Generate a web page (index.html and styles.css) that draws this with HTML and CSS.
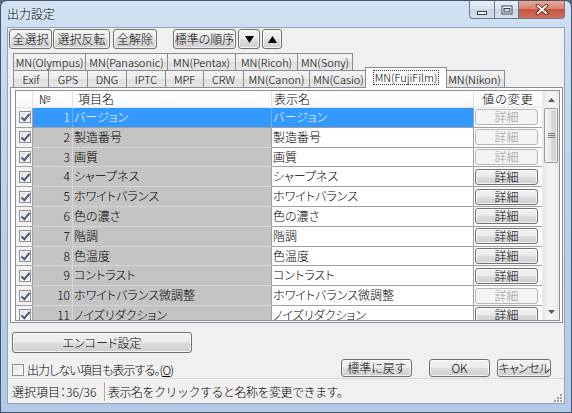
FILE: index.html
```html
<!DOCTYPE html>
<html lang="ja">
<head>
<meta charset="utf-8">
<title>出力設定</title>
<link rel="stylesheet" href="styles.css">
</head>
<body>
<div class="window">
  <div class="titlebar">
    <div class="title">出力設定</div>
    <div class="caption-buttons">
      <div class="cap cap-min"><svg width="12" height="6" viewBox="0 0 12 6"><rect x="1.5" y="1.5" width="9" height="3" fill="#fff" stroke="#34435a"/></svg></div>
      <div class="cap cap-max"><svg width="12" height="10" viewBox="0 0 12 10"><rect x="0.5" y="0.5" width="11" height="9" fill="#34435a"/><rect x="1.5" y="1.5" width="9" height="7" fill="#fff"/><rect x="3" y="3.5" width="6" height="3.5" fill="#cfdbea" stroke="#34435a"/></svg></div>
      <div class="cap cap-close"><svg width="14" height="11" viewBox="0 0 14 11"><path d="M2.5 1.5 L11.5 9.5 M11.5 1.5 L2.5 9.5" stroke="#5a1c14" stroke-width="3.6" stroke-linecap="round"/><path d="M2.5 1.5 L11.5 9.5 M11.5 1.5 L2.5 9.5" stroke="#fff" stroke-width="1.8" stroke-linecap="round"/></svg></div>
    </div>
  </div>

  <div class="client">
    <div class="toolbar">
      <button class="btn w-all">全選択</button>
      <button class="btn w-inv">選択反転</button>
      <button class="btn w-clr">全解除</button>
      <button class="btn w-std">標準の順序</button>
      <button class="btn w-down"><svg width="9" height="7" viewBox="0 0 9 7"><polygon points="0,0 9,0 4.5,7" fill="#000"/></svg></button>
      <button class="btn w-up"><svg width="9" height="7" viewBox="0 0 9 7"><polygon points="4.5,0 9,7 0,7" fill="#000"/></svg></button>
    </div>

    <div class="tabs">
      <div class="tabrow">
        <div class="tab t73">MN(Olympus)</div>
        <div class="tab t83">MN(Panasonic)</div>
        <div class="tab t69">MN(Pentax)</div>
        <div class="tab t63">MN(Ricoh)</div>
        <div class="tab t56">MN(Sony)</div>
      </div>
      <div class="tabrow">
        <div class="tab t36">Exif</div>
        <div class="tab t40">GPS</div>
        <div class="tab t40">DNG</div>
        <div class="tab t40">IPTC</div>
        <div class="tab t39">MPF</div>
        <div class="tab t41">CRW</div>
        <div class="tab t67">MN(Canon)</div>
        <div class="tab t59">MN(Casio)</div>
        <div class="tab t78 sel"><span class="focus">MN(FujiFilm)</span></div>
        <div class="tab t61">MN(Nikon)</div>
      </div>
    </div>

    <div class="panel">
      <div class="grid">
        <div class="gmain">
          <div class="ghead">
            <div class="h h-chk"></div>
            <div class="h h-no">№</div>
            <div class="h h-name">項目名</div>
            <div class="h h-disp">表示名</div>
            <div class="h h-val">値の変更</div>
          </div>
          <div class="grow sel">
            <div class="c c-chk"><span class="gchk"></span></div>
            <div class="c c-no">1</div>
            <div class="c c-name">バージョン</div>
            <div class="c c-disp">バージョン</div>
            <div class="c c-val"><span class="dbtn off">詳細</span></div>
          </div>
          <div class="grow">
            <div class="c c-chk"><span class="gchk"></span></div>
            <div class="c c-no">2</div>
            <div class="c c-name">製造番号</div>
            <div class="c c-disp">製造番号</div>
            <div class="c c-val"><span class="dbtn off">詳細</span></div>
          </div>
          <div class="grow">
            <div class="c c-chk"><span class="gchk"></span></div>
            <div class="c c-no">3</div>
            <div class="c c-name">画質</div>
            <div class="c c-disp">画質</div>
            <div class="c c-val"><span class="dbtn off">詳細</span></div>
          </div>
          <div class="grow">
            <div class="c c-chk"><span class="gchk"></span></div>
            <div class="c c-no">4</div>
            <div class="c c-name">シャープネス</div>
            <div class="c c-disp">シャープネス</div>
            <div class="c c-val"><span class="dbtn">詳細</span></div>
          </div>
          <div class="grow">
            <div class="c c-chk"><span class="gchk"></span></div>
            <div class="c c-no">5</div>
            <div class="c c-name">ホワイトバランス</div>
            <div class="c c-disp">ホワイトバランス</div>
            <div class="c c-val"><span class="dbtn">詳細</span></div>
          </div>
          <div class="grow">
            <div class="c c-chk"><span class="gchk"></span></div>
            <div class="c c-no">6</div>
            <div class="c c-name">色の濃さ</div>
            <div class="c c-disp">色の濃さ</div>
            <div class="c c-val"><span class="dbtn">詳細</span></div>
          </div>
          <div class="grow">
            <div class="c c-chk"><span class="gchk"></span></div>
            <div class="c c-no">7</div>
            <div class="c c-name">階調</div>
            <div class="c c-disp">階調</div>
            <div class="c c-val"><span class="dbtn">詳細</span></div>
          </div>
          <div class="grow">
            <div class="c c-chk"><span class="gchk"></span></div>
            <div class="c c-no">8</div>
            <div class="c c-name">色温度</div>
            <div class="c c-disp">色温度</div>
            <div class="c c-val"><span class="dbtn">詳細</span></div>
          </div>
          <div class="grow">
            <div class="c c-chk"><span class="gchk"></span></div>
            <div class="c c-no">9</div>
            <div class="c c-name">コントラスト</div>
            <div class="c c-disp">コントラスト</div>
            <div class="c c-val"><span class="dbtn">詳細</span></div>
          </div>
          <div class="grow">
            <div class="c c-chk"><span class="gchk"></span></div>
            <div class="c c-no">10</div>
            <div class="c c-name">ホワイトバランス微調整</div>
            <div class="c c-disp">ホワイトバランス微調整</div>
            <div class="c c-val"><span class="dbtn off">詳細</span></div>
          </div>
          <div class="grow">
            <div class="c c-chk"><span class="gchk"></span></div>
            <div class="c c-no">11</div>
            <div class="c c-name">ノイズリダクション</div>
            <div class="c c-disp">ノイズリダクション</div>
            <div class="c c-val"><span class="dbtn">詳細</span></div>
          </div>
        </div>
        <div class="vscroll">
          <div class="sb-btn"><svg width="7" height="4" viewBox="0 0 7 4"><polygon points="3.5,0 7,4 0,4" fill="#5c5c5c"/></svg></div>
          <div class="sb-track">
            <div class="sb-thumb"><svg width="7" height="5" viewBox="0 0 7 5"><path d="M0 0.5 H7 M0 2.5 H7 M0 4.5 H7" stroke="#7a7a7a" stroke-width="1"/></svg></div>
          </div>
          <div class="sb-btn"><svg width="7" height="4" viewBox="0 0 7 4"><polygon points="0,0 7,0 3.5,4" fill="#5c5c5c"/></svg></div>
        </div>
      </div>
    </div>

    <div class="encode-row">
      <button class="btn w-enc">エンコード設定</button>
    </div>

    <div class="options-row">
      <label class="showall"><span class="ubox"></span><span class="showall-text">出力しない項目も表示する。(<u>O</u>)</span></label>
      <div class="actions">
        <button class="btn w-reset">標準に戻す</button>
        <button class="btn w-ok">OK</button>
        <button class="btn w-cancel">キャンセル</button>
      </div>
    </div>

    <div class="status">
      <span class="st-count">選択項目：36/36</span>
      <span class="st-sep"></span>
      <span class="st-msg">表示名をクリックすると名称を変更できます。</span>
      <span class="st-grip"><svg width="8" height="8" viewBox="0 0 8 8"><g fill="#9aa0a8"><rect x="6" y="0" width="2" height="2"/><rect x="3" y="3" width="2" height="2"/><rect x="6" y="3" width="2" height="2"/><rect x="0" y="6" width="2" height="2"/><rect x="3" y="6" width="2" height="2"/><rect x="6" y="6" width="2" height="2"/></g></svg></span>
    </div>
  </div>
  <div class="bottom-frame"></div>
</div>
</body>
</html>
```

FILE: styles.css
```css
* { box-sizing: border-box; }
html, body { margin: 0; padding: 0; }
body {
  width: 572px;
  height: 413px;
  overflow: hidden;
  background: #5d6a7a;
  font-family: "Noto Sans CJK JP", "Liberation Sans", sans-serif;
  font-size: 12px;
  font-weight: 300;
  font-feature-settings: "palt";
  color: #000;
}

.window {
  width: 572px;
  height: 413px;
  border: 1px solid #46566c;
  border-radius: 7px 7px 0 0;
  background: linear-gradient(180deg, #d2e1f3 0%, #c3d7ee 25%, #b9cfe9 60%, #b3cae6 100%);
  display: flex;
  flex-direction: column;
  overflow: hidden;
}

/* title bar */
.titlebar {
  height: 27px;
  display: flex;
  align-items: flex-start;
  padding-left: 6px;
  flex: none;
}
.title {
  margin-top: 5px;
  line-height: 16px;
  font-size: 12px;
  text-shadow: 0 0 6px rgba(255,255,255,0.9);
}
.caption-buttons {
  margin-left: auto;
  margin-right: 6px;
  display: flex;
  height: 18px;
}
.cap {
  height: 18px;
  border: 1px solid #6a7890;
  border-top: none;
  display: flex;
  align-items: center;
  justify-content: center;
}
.cap-min {
  width: 26px;
  border-radius: 0 0 0 4px;
  background: linear-gradient(180deg, #e9eef5 0%, #dce4ee 45%, #cbd6e4 50%, #d6dfeb 100%);
  padding-top: 6px;
}
.cap-max {
  width: 24px;
  border-left: none;
  background: linear-gradient(180deg, #e9eef5 0%, #dce4ee 45%, #cbd6e4 50%, #d6dfeb 100%);
}
.cap-close {
  width: 46px;
  border-left: none;
  border-radius: 0 0 4px 0;
  background: linear-gradient(180deg, #e9a898 0%, #d98571 45%, #c5533f 50%, #d0705c 100%);
}

/* client */
.client {
  margin: 0 7px;
  width: 556px;
  height: 375px;
  background: #f0f0f0;
  box-shadow: 0 0 0 1px #8ea3bd;
  display: flex;
  flex-direction: column;
  flex: none;
}
.bottom-frame { flex: 1; }

/* buttons */
.btn {
  font: inherit;
  color: #000;
  padding: 0;
  margin: 0;
  border: 1px solid #707070;
  border-radius: 3px;
  background: linear-gradient(180deg, #f2f2f2 0%, #ebebeb 48%, #dddddd 52%, #cfcfcf 100%);
  box-shadow: inset 0 0 0 1px rgba(255,255,255,0.75);
  display: flex;
  align-items: center;
  justify-content: center;
  line-height: 14px;
  white-space: nowrap;
  flex: none;
}

.toolbar {
  display: flex;
  height: 20px;
  margin-top: 1px;
  padding-left: 1px;
  flex: none;
}
.toolbar .btn { height: 20px; }
.w-all { width: 43px; }
.w-inv { width: 57px; margin-left: 1px; }
.w-clr { width: 44px; margin-left: 3px; }
.w-std { width: 63px; margin-left: 16px; }
.w-down { width: 22px; margin-left: 2px; }
.w-up { width: 20px; margin-left: 2px; }

/* tabs */
.tabs {
  margin-top: 4px;
  margin-left: 5px;
  height: 34px;
  flex: none;
}
.tabrow {
  display: flex;
  height: 17px;
}
.tab {
  height: 17px;
  border: 1px solid #898c95;
  border-bottom: none;
  margin-left: -1px;
  background: linear-gradient(180deg, #f4f4f4 0%, #ececec 48%, #dfdfdf 52%, #e6e6e6 100%);
  font-size: 11px;
  line-height: 14px;
  display: flex;
  align-items: center;
  justify-content: center;
  white-space: nowrap;
  flex: none;
}
.tabrow .tab:first-child { margin-left: 0; }
.tab.sel {
  position: relative;
  z-index: 2;
  background: #fff;
  margin-left: -3px;
  margin-right: -2px;
  margin-top: -3px;
  height: 21px;
  padding-bottom: 1px;
}
.focus {
  border: 1px dotted #333;
  padding: 0 1px;
  line-height: 13px;
}
.t36 { width: 36px; }
.t39 { width: 39px; }
.t40 { width: 40px; }
.t41 { width: 41px; }
.t56 { width: 56px; }
.t59 { width: 59px; }
.t61 { width: 61px; }
.t63 { width: 63px; }
.t67 { width: 67px; }
.t69 { width: 69px; }
.t73 { width: 73px; }
.t78 { width: 82px; }
.t83 { width: 83px; }

/* panel & grid */
.panel {
  margin-left: 2px;
  width: 553px;
  height: 236px;
  border: 1px solid #898c95;
  background: #fff;
  padding: 2px 0 0 4px;
  flex: none;
  position: relative;
  z-index: 1;
}
.grid {
  width: 545px;
  height: 231px;
  border: 1px solid #8a8f98;
  display: flex;
  background: #fff;
}
.gmain {
  width: 526px;
  height: 229px;
  overflow: hidden;
}
.ghead, .grow {
  display: grid;
  grid-template-columns: 17px 40px 199px 202px 68px;
}
.ghead { height: 17px; }
.h {
  background: linear-gradient(180deg, #ffffff 0%, #f6f7f9 100%);
  border-right: 1px solid #e2e3e6;
  border-bottom: 1px solid #e6e7ea;
  line-height: 16px;
  white-space: nowrap;
}
.h-no { padding-left: 6px; }
.h-name { padding-left: 5px; }
.h-disp { padding-left: 2px; }
.h-val { text-align: center; border-right: none; padding-left: 0; letter-spacing: 1px; }

.grow { height: 19.8px; }
.c {
  border-bottom: 1px solid #a0a0a0;
  line-height: 18px;
  white-space: nowrap;
  overflow: hidden;
}
.c-chk {
  background: #f4f4f4;
  border-right: 1px solid #a0a0a0;
  display: flex;
  align-items: center;
  justify-content: center;
}
.c-no {
  background: #c4c4c4;
  border-right: 1px solid #d6d6d6;
  border-bottom-color: #d6d6d6;
  text-align: right;
  padding-right: 2px;
}
.c-name {
  background: #c4c4c4;
  border-right: 1px solid #a0a0a0;
  border-bottom-color: #d6d6d6;
  padding-left: 1px;
}
.c-disp {
  background: #fff;
  border-right: 1px solid #a0a0a0;
  padding-left: 1px;
}
.c-val {
  background: #fbfbfb;
  display: flex;
  align-items: center;
  padding-left: 1px;
}
.grow.sel .c-no,
.grow.sel .c-name,
.grow.sel .c-disp {
  background: #3399ff;
  color: #fff;
  border-bottom-color: #a0a0a0;
}
.grow.sel .c-no { border-right-color: #6ab3ff; }
.grow.sel .c-name { border-right-color: #6ab3ff; }

.gchk {
  width: 12px;
  height: 12px;
  border: 1px solid #8f8f8f;
  background: linear-gradient(135deg, #d8d8d8 0%, #f2f2f2 60%, #ffffff 100%);
  box-shadow: inset 0 0 0 1px #f4f4f4;
  position: relative;
  margin-left: 2px;
}
.gchk::after {
  content: "";
  position: absolute;
  left: 3px;
  top: 0px;
  width: 3px;
  height: 7px;
  border: solid #4a5a7a;
  border-width: 0 2px 2px 0;
  transform: rotate(40deg);
}

.dbtn {
  width: 63px;
  height: 16px;
  border: 1px solid #707070;
  border-radius: 3px;
  background: linear-gradient(180deg, #f2f2f2 0%, #ebebeb 48%, #dddddd 52%, #cfcfcf 100%);
  box-shadow: inset 0 0 0 1px rgba(255,255,255,0.75);
  display: flex;
  align-items: center;
  justify-content: center;
  line-height: 14px;
  font-size: 12px;
}
.dbtn.off {
  border-color: #b4b8bb;
  background: #f4f4f4;
  color: #9a9a9a;
  box-shadow: none;
}

.vscroll {
  width: 17px;
  height: 229px;
  display: flex;
  flex-direction: column;
  background: linear-gradient(90deg, #e6e6e6 0%, #f2f2f2 30%, #f2f2f2 70%, #e9e9e9 100%);
  border-left: 1px solid #ececec;
}
.sb-btn {
  height: 17px;
  display: flex;
  align-items: center;
  justify-content: center;
  flex: none;
}
.sb-track { flex: 1; }
.sb-thumb {
  margin: 0 1px;
  height: 55px;
  border: 1px solid #979797;
  border-radius: 2px;
  background: linear-gradient(90deg, #f3f3f3 0%, #e9e9e9 45%, #d8d8d8 55%, #d0d0d0 100%);
  box-shadow: inset 0 0 0 1px rgba(255,255,255,0.7);
  display: flex;
  align-items: center;
  justify-content: center;
}

/* encode */
.encode-row {
  margin-top: 9px;
  padding-left: 4px;
  height: 21px;
  flex: none;
}
.w-enc { width: 180px; height: 21px; }

/* options */
.options-row {
  margin-top: 6px;
  height: 18px;
  display: flex;
  align-items: center;
  flex: none;
}
.showall {
  display: flex;
  align-items: center;
  margin-left: 4px;
  margin-top: 4px;
  line-height: 14px;
}
.showall-text { letter-spacing: -0.9px; white-space: nowrap; }
.ubox {
  width: 12px;
  height: 12px;
  border: 1px solid #8f8f8f;
  background: linear-gradient(135deg, #dcdcdc 0%, #f4f4f4 60%, #ffffff 100%);
  box-shadow: inset 0 0 0 1px #f6f6f6;
  margin-right: 3px;
}
.actions {
  margin-left: auto;
  margin-right: 13px;
  display: flex;
}
.actions .btn { height: 18px; }
.w-reset { width: 71px; }
.w-ok { width: 61px; margin-left: 17px; }
.w-cancel { width: 54px; margin-left: 7px; letter-spacing: -0.6px; }

/* status bar */
.status {
  margin-top: 1px;
  height: 25px;
  display: flex;
  align-items: center;
  border-top: 1px solid #dadada;
  padding-left: 4px;
  position: relative;
  flex: none;
}
.st-count {
  width: 92px;
  white-space: nowrap;
}
.st-sep {
  width: 1px;
  height: 19px;
  background: #a8a8a8;
  box-shadow: 1px 0 0 #fff;
}
.st-msg {
  margin-left: 3px;
  white-space: nowrap;
  font-feature-settings: normal;
  letter-spacing: -0.5px;
}
.st-grip {
  margin-left: auto;
  margin-right: 2px;
  align-self: flex-end;
  margin-bottom: 1px;
  display: flex;
}
```
